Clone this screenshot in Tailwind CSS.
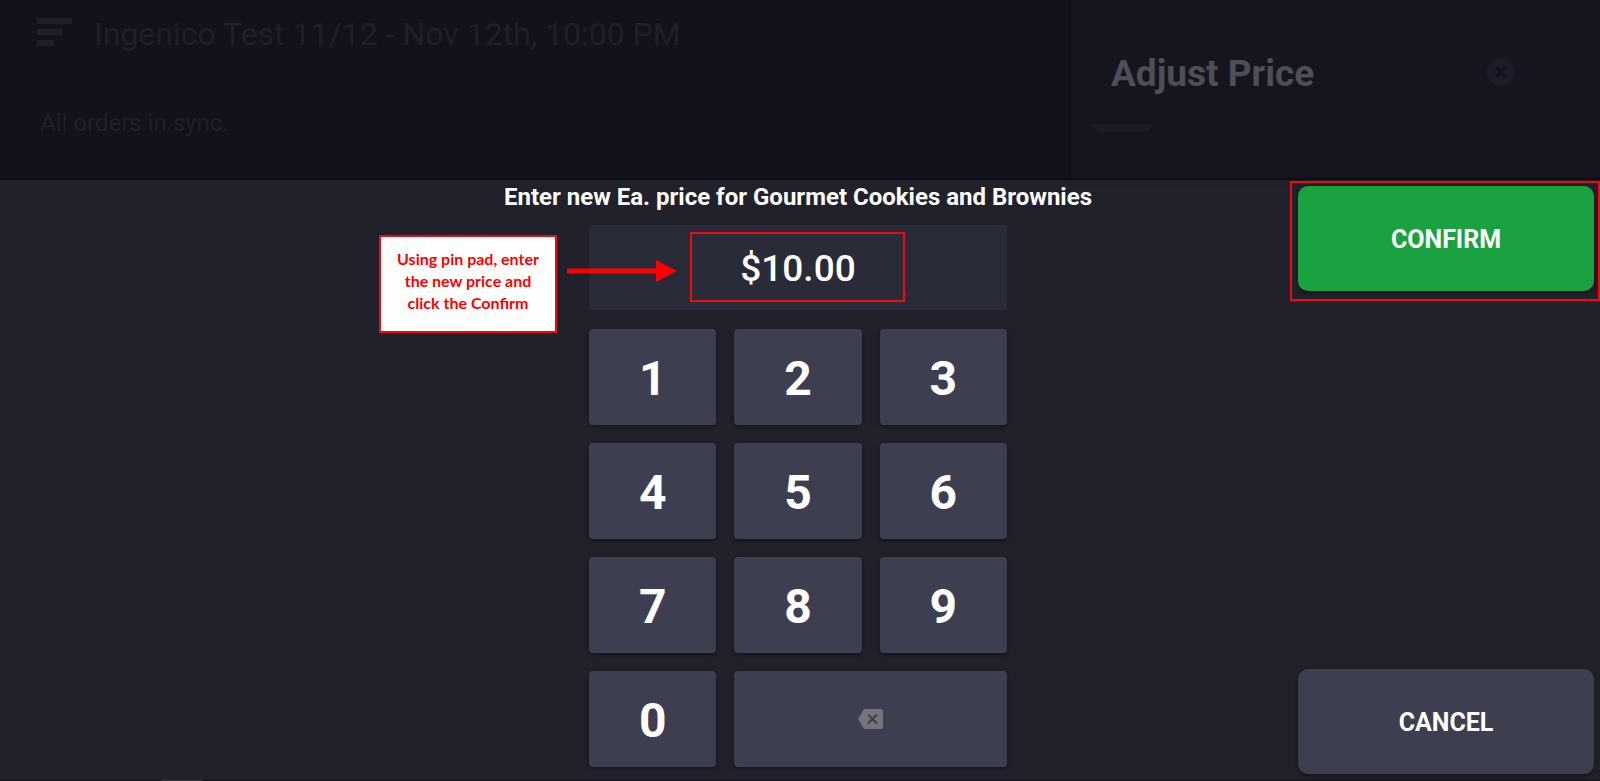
<!DOCTYPE html>
<html lang="en">
<head>
<meta charset="utf-8">
<meta name="viewport" content="width=device-width, initial-scale=1">
<title>Adjust Price</title>
<script src="https://cdn.jsdelivr.net/npm/@tailwindcss/browser@4"></script>
</head>
<body class="flex min-h-screen flex-col bg-[#21212b] font-[Roboto,sans-serif] text-white">
  <!-- Dimmed page behind the price sheet -->
  <header class="flex h-[180px] shrink-0 border-b-2 border-[#0f0f18] bg-[#12121c]">
    <div class="flex-1 pl-[37px] pt-4">
      <div class="flex items-start gap-[22px] text-[#1f1f29]">
        <button type="button" aria-label="Menu" class="mt-[2px]">
          <svg class="block" width="35" height="28" viewBox="0 0 35 28" fill="currentColor" aria-hidden="true"><path d="M0 0h35v6H0zM0 11h25v6H0zM0 22h17v6H0z"/></svg>
        </button>
        <h1 class="text-[32px] leading-9">Ingenico Test 11/12 - Nov 12th, 10:00 PM</h1>
      </div>
      <p class="mt-[55px] pl-[3px] text-2xl leading-8 text-[#1f1f29]">All orders in sync.</p>
    </div>
    <aside class="flex w-[529px] flex-col bg-[#151520] pl-[22px] shadow-[0_0_8px_rgba(0,0,0,0.3)]">
      <div class="flex h-[124px] items-center justify-between pl-[18px] pr-[85px] pt-[20px]">
        <h2 class="pt-1 text-[37px] font-bold text-[#4e4e57]">Adjust Price</h2>
        <button type="button" aria-label="Close">
          <svg class="block" width="28" height="28" viewBox="0 0 28 28" aria-hidden="true"><circle cx="14" cy="14" r="14" fill="#1c1c28"/><path d="M9 9l10 10M19 9L9 19" stroke="#12121c" stroke-width="3"/></svg>
        </button>
      </div>
      <div class="h-2 w-[60px] rounded-b-xl bg-[#1c1c28]"></div>
    </aside>
  </header>

  <main class="grid flex-1 grid-cols-[306px_1fr_310px]">
    <section class="col-start-2 flex flex-col items-center">
      <label for="price" class="whitespace-nowrap text-2xl font-bold leading-[34px]">Enter new Ea. price for Gourmet Cookies and Brownies</label>
      <div class="relative mt-[11px] w-[418px]">
        <input id="price" type="text" value="$10.00" class="block h-[85px] w-full rounded bg-[#2a2b38] pt-[2px] text-center text-[37px] font-medium outline-none">
        <!-- Instruction callout, arrow and highlight -->
        <div class="pointer-events-none absolute left-[101px] top-[7px] h-[70px] w-[215px] border-2 border-[#ee0a0e]"></div>
        <svg class="pointer-events-none absolute -left-[22px] top-[35px]" width="110" height="22" viewBox="0 0 110 22" fill="#ff0000" aria-hidden="true"><path d="M0 8.500h89V0l21 11-21 11v-8.500H0z"/></svg>
        <p class="absolute -left-[210px] top-[10px] h-[98px] w-[178px] border-2 border-[#ee0a0e] bg-white pt-[11px] text-center font-[Lato,sans-serif] text-base font-bold leading-[22px] text-[#ff0000]">Using pin pad, enter<br>the new price and<br>click the Confirm</p>
      </div>
      <div class="mt-[19px] grid w-[418px] grid-cols-3 gap-[18px] text-5xl font-bold leading-none">
        <button type="button" class="h-24 rounded bg-[#3d3e50] pt-1 shadow-[0_2px_4px_rgba(0,0,0,0.4)]">1</button>
        <button type="button" class="h-24 rounded bg-[#3d3e50] pt-1 shadow-[0_2px_4px_rgba(0,0,0,0.4)]">2</button>
        <button type="button" class="h-24 rounded bg-[#3d3e50] pt-1 shadow-[0_2px_4px_rgba(0,0,0,0.4)]">3</button>
        <button type="button" class="h-24 rounded bg-[#3d3e50] pt-1 shadow-[0_2px_4px_rgba(0,0,0,0.4)]">4</button>
        <button type="button" class="h-24 rounded bg-[#3d3e50] pt-1 shadow-[0_2px_4px_rgba(0,0,0,0.4)]">5</button>
        <button type="button" class="h-24 rounded bg-[#3d3e50] pt-1 shadow-[0_2px_4px_rgba(0,0,0,0.4)]">6</button>
        <button type="button" class="h-24 rounded bg-[#3d3e50] pt-1 shadow-[0_2px_4px_rgba(0,0,0,0.4)]">7</button>
        <button type="button" class="h-24 rounded bg-[#3d3e50] pt-1 shadow-[0_2px_4px_rgba(0,0,0,0.4)]">8</button>
        <button type="button" class="h-24 rounded bg-[#3d3e50] pt-1 shadow-[0_2px_4px_rgba(0,0,0,0.4)]">9</button>
        <button type="button" class="h-24 rounded bg-[#3d3e50] pt-1 shadow-[0_2px_4px_rgba(0,0,0,0.4)]">0</button>
        <button type="button" aria-label="Backspace" class="col-span-2 flex h-24 items-center justify-center rounded bg-[#3d3e50] shadow-[0_2px_4px_rgba(0,0,0,0.4)]">
          <svg width="25" height="20" viewBox="0 0 25 20" aria-hidden="true"><path d="M7 0h16a2 2 0 0 1 2 2v16a2 2 0 0 1-2 2H7a2 2 0 0 1-1.600-.9L0 10 5.400.9A2 2 0 0 1 7 0z" fill="#74747b"/><path d="M10 5.500l9 9M19 5.500l-9 9" stroke="#3d3e50" stroke-width="2"/></svg>
        </button>
      </div>
    </section>
    <section class="flex flex-col justify-between pb-[6px] pt-px text-[25px] font-bold">
      <div class="border-2 border-[#ee0a0e] pb-2 pl-[6px] pr-1 pt-[3px]">
        <button type="button" class="block h-[105px] w-full rounded-[10px] bg-[#1aa241] pt-[2px] shadow-[0_2px_4px_rgba(0,0,0,0.4)]">CONFIRM</button>
      </div>
      <div class="pl-2 pr-[6px]">
        <button type="button" class="block h-[105px] w-full rounded-[10px] bg-[#3d3e50] pt-[2px] shadow-[0_2px_4px_rgba(0,0,0,0.4)]">CANCEL</button>
      </div>
    </section>
  </main>
  <footer class="h-px bg-[#0f0f16] pl-[161px]"><div class="h-px w-[41px] bg-[#3a3a3e]"></div></footer>
</body>
</html>
